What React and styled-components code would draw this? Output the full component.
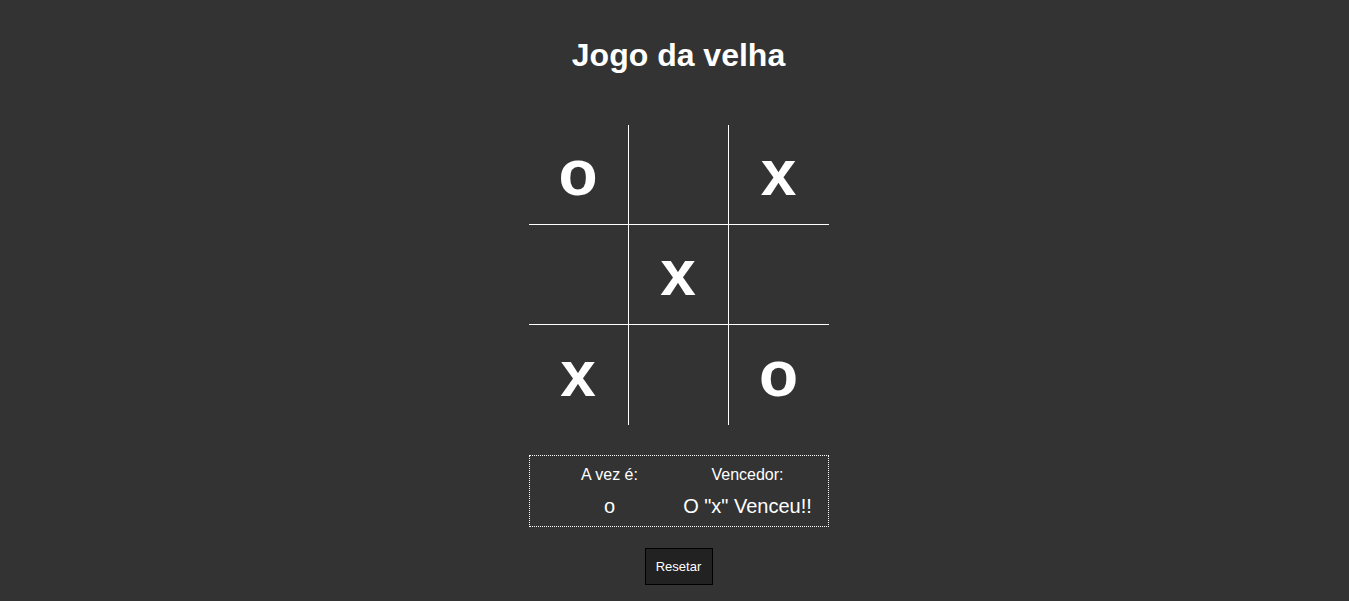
import React from "react";
import styled, { createGlobalStyle } from "styled-components";

const Global = createGlobalStyle`
  html, body { margin: 0; padding: 0; background: #333333; }
  body { font-family: "Liberation Sans", Arial, sans-serif; color: #ffffff; }
`;

const Page = styled.div`
  display: flex;
  flex-direction: column;
  align-items: center;
  min-height: 601px;
  padding-top: 37px;
  padding-left: 8px;
  box-sizing: border-box;
`;

const Title = styled.h1`
  margin: 0;
  font-size: 32px;
  font-weight: bold;
  line-height: 37px;
  color: #fff;
`;

const Board = styled.div`
  margin-top: 51px;
  display: grid;
  grid-template-columns: repeat(3, 100px);
  grid-template-rows: repeat(3, 100px);
  width: 300px;
`;

const Cell = styled.div`
  box-sizing: border-box;
  display: flex;
  align-items: center;
  justify-content: center;
  font-size: 64px;
  line-height: 1;
  font-weight: bold;
  color: #fff;
  padding-bottom: 3px;
  border-right: ${(p) => (p.$right ? "1px solid #fff" : "none")};
  border-bottom: ${(p) => (p.$bottom ? "1px solid #fff" : "none")};
`;

const Info = styled.div`
  margin-top: 30px;
  width: 300px;
  height: 72px;
  box-sizing: border-box;
  border: 1px dotted #fff;
  display: flex;
  align-items: flex-start;
  padding-top: 10px;
`;

const Column = styled.div`
  box-sizing: border-box;
  width: ${(p) => p.$w}px;
  padding-left: ${(p) => p.$pl || 0}px;
  display: flex;
  flex-direction: column;
  align-items: center;
`;

const Label = styled.div`
  font-size: 16px;
  line-height: 18px;
`;

const Value = styled.div`
  font-size: 20px;
  line-height: 23px;
  margin-top: 11px;
`;

const ResetButton = styled.button`
  margin-top: 21px;
  width: 68px;
  height: 37px;
  background: #222222;
  border: 1px solid #000;
  color: #fff;
  font-family: "Liberation Sans", Arial, sans-serif;
  font-size: 13px;
  padding: 0;
  cursor: pointer;
`;

const cells = ["o", "", "x", "", "x", "", "x", "", "o"];

export default function App() {
  return (
    <>
      <Global />
      <Page>
        <Title>Jogo da velha</Title>
        <Board>
          {cells.map((c, i) => (
            <Cell key={i} $right={i % 3 !== 2} $bottom={i < 6}>
              {c}
            </Cell>
          ))}
        </Board>
        <Info>
          <Column $w={150} $pl={10}>
            <Label>A vez é:</Label>
            <Value>o</Value>
          </Column>
          <Column $w={136}>
            <Label>Vencedor:</Label>
            <Value>O "x" Venceu!!</Value>
          </Column>
        </Info>
        <ResetButton>Resetar</ResetButton>
      </Page>
    </>
  );
}
